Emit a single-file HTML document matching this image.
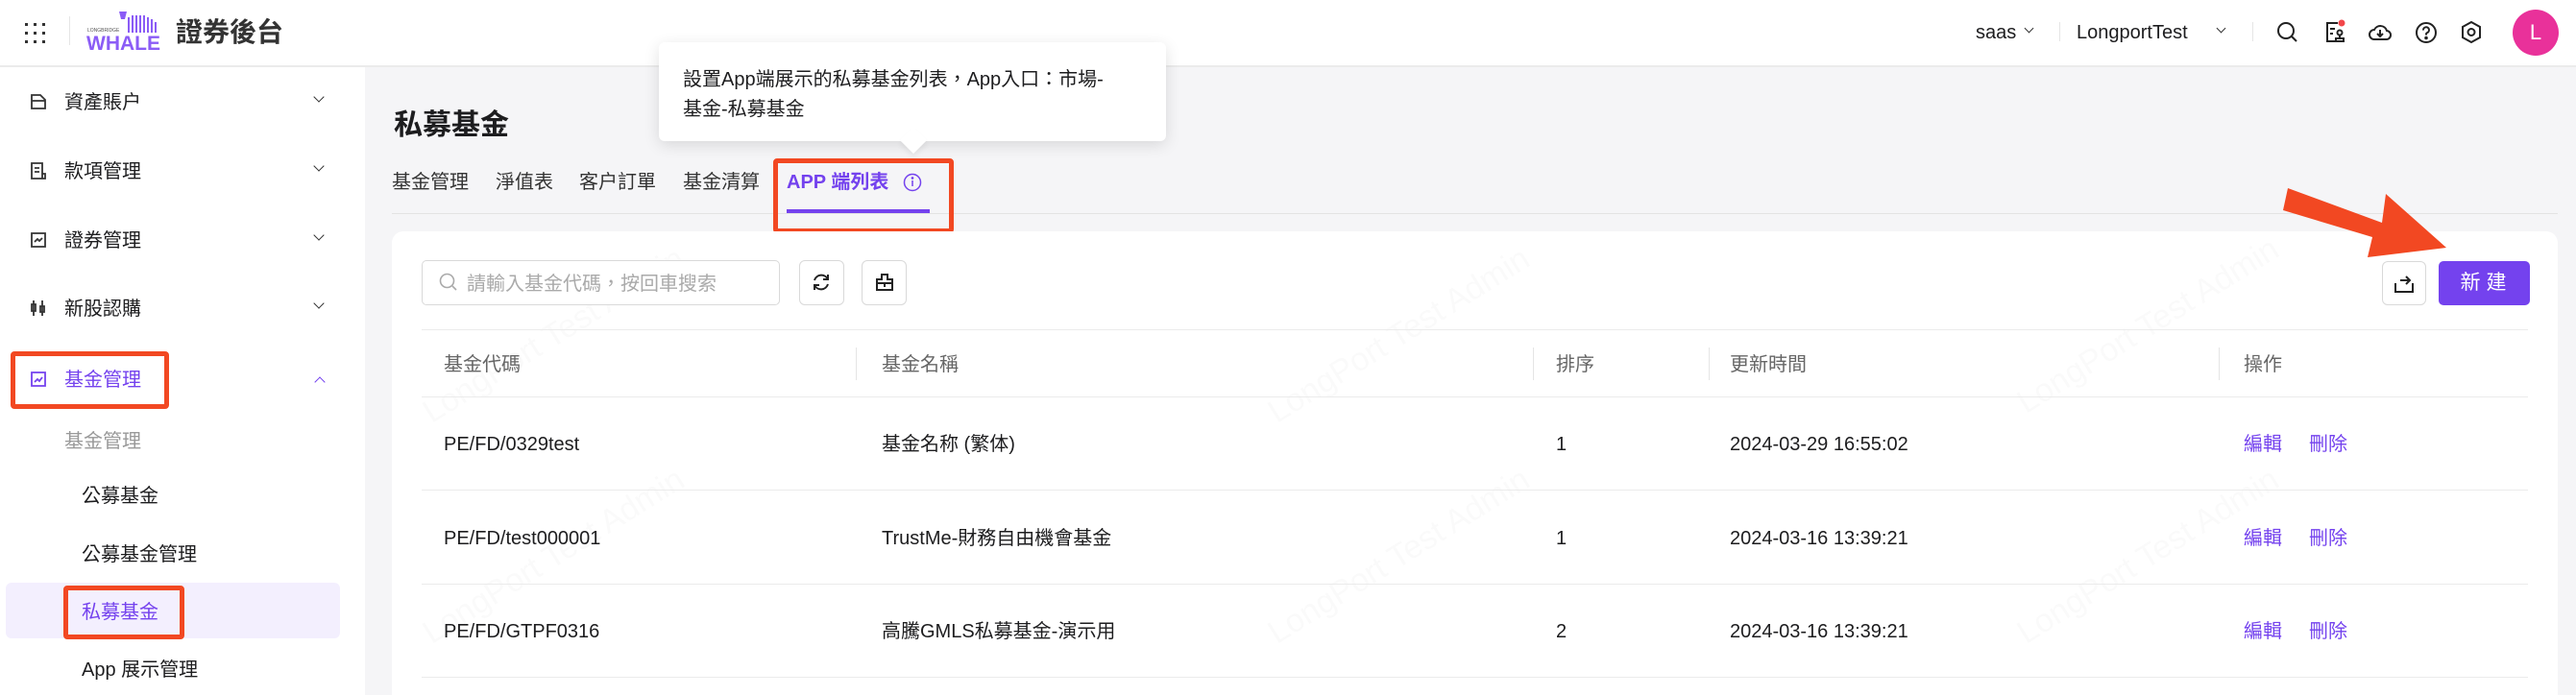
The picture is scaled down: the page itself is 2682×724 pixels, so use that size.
<!DOCTYPE html>
<html style="width:2682px;height:724px;overflow:hidden"><head><meta charset="utf-8"><style>
*{margin:0;padding:0;box-sizing:border-box}
body{width:2682px;height:724px;overflow:hidden;background:#f5f5f7;font-family:"Liberation Sans","Noto Sans CJK TC",sans-serif;color:#1d1d1f;position:relative}
.a{position:absolute;white-space:nowrap;line-height:24px}
.hdr{position:absolute;left:0;top:0;width:2682px;height:70px;background:#fff;border-bottom:2px solid #ebebeb}
.side{position:absolute;left:0;top:70px;width:380px;height:654px;background:#fff}
.mi{font-size:20px;color:#1d1d1f}
.chev{position:absolute;width:10px;height:10px;border-right:2px solid #333;border-bottom:2px solid #333;transform:rotate(45deg)}
.red{position:absolute;border:5px solid #f24822;border-radius:4px}
.card{position:absolute;left:408px;top:241px;width:2255px;height:483px;background:#fff;border-radius:12px 12px 0 0}
.th{font-size:20px;color:#666}
.td{font-size:20px;color:#1d1d1f}
.hl{position:absolute;left:439px;width:2193px;height:1px;background:#ebebeb}
.sep{position:absolute;width:1px;height:34px;background:#e5e5e5;top:362px}
.lnk{font-size:20px;color:#7442ee}
.btn{position:absolute;border:1.5px solid #d9d9d9;border-radius:6px;background:#fff}
.wm{position:absolute;font-size:34px;color:rgba(0,0,0,0.02);transform:rotate(-32deg);white-space:nowrap}
</style></head><body>
<div class="hdr"></div>
<svg class="a" style="left:26px;top:24px" width="22" height="22"><g fill="#333"><rect x="0" y="0" width="3" height="3"/><rect x="9" y="0" width="3" height="3"/><rect x="18" y="0" width="3" height="3"/><rect x="0" y="9" width="3" height="3"/><rect x="9" y="9" width="3" height="3"/><rect x="18" y="9" width="3" height="3"/><rect x="0" y="18" width="3" height="3"/><rect x="9" y="18" width="3" height="3"/><rect x="18" y="18" width="3" height="3"/></g></svg>
<div class="a" style="left:72px;top:17px;width:1px;height:30px;background:#e5e5e5"></div>
<svg class="a" style="left:90px;top:10px" width="78" height="44"><g fill="#8b5cf6"><rect x="43" y="8" width="2" height="16"/><rect x="47" y="6" width="2" height="18"/><rect x="51" y="6" width="2" height="18"/><rect x="55" y="6" width="2" height="18"/><rect x="59" y="6" width="2" height="18"/><rect x="63" y="8" width="2" height="16"/><rect x="67" y="10" width="2" height="14"/><rect x="71" y="13" width="2" height="11"/><path d="M34 2 L42 2 L40 10 L36 10Z"/></g><text x="1" y="23" font-size="5" fill="#555" font-family="Liberation Sans">LONGBRIDGE</text><text x="0" y="42" font-size="21" font-weight="bold" fill="#8b5cf6" font-family="Liberation Sans">WHALE</text></svg>
<div class="a" style="left:183px;top:16px;font-size:28px;line-height:36px;font-weight:bold;color:#333">證券後台</div>
<div class="a" style="left:2057px;top:22px;font-size:20px">saas</div>
<div class="chev" style="left:2109px;top:26px;width:7px;height:7px;border-width:1.5px"></div>
<div class="a" style="left:2144px;top:23px;width:1px;height:20px;background:#e5e5e5"></div>
<div class="a" style="left:2162px;top:22px;font-size:20px">LongportTest</div>
<div class="chev" style="left:2309px;top:26px;width:7px;height:7px;border-width:1.5px"></div>
<div class="a" style="left:2345px;top:23px;width:1px;height:20px;background:#e5e5e5"></div>
<svg class="a" style="left:2370px;top:22px" width="24" height="24" fill="none" stroke="#222" stroke-width="2"><circle cx="10" cy="10" r="8"/><path d="M16 16l5 5"/></svg>
<svg class="a" style="left:2420px;top:20px" width="26" height="26" fill="none" stroke="#222" stroke-width="2"><path d="M14 4H3v19h8M6 10h5M6 15h3"/><circle cx="16" cy="14" r="2.5"/><path d="M16 17v3M12 20h8v3h-8z"/><circle cx="18" cy="4" r="3.5" fill="#f2474a" stroke="none"/></svg>
<svg class="a" style="left:2466px;top:22px" width="24" height="24" fill="none" stroke="#222" stroke-width="2"><path d="M6 19a5 5 0 0 1 0-10 7 7 0 0 1 13 1 4.5 4.5 0 0 1-1 9z"/><path d="M12 9v7M9 13l3 3 3-3"/></svg>
<svg class="a" style="left:2514px;top:22px" width="24" height="24" fill="none" stroke="#222" stroke-width="2"><circle cx="12" cy="12" r="10"/><path d="M9 9.5a3 3 0 1 1 4 2.6c-1 .5-1 1-1 2.4"/><circle cx="12" cy="17.5" r=".8" fill="#222"/></svg>
<svg class="a" style="left:2561px;top:21px" width="24" height="26" fill="none" stroke="#222" stroke-width="2"><path d="M12 2l9 5v11l-9 5-9-5V7z"/><circle cx="12" cy="12.5" r="3.5"/></svg>
<div class="a" style="left:2616px;top:10px;width:48px;height:48px;border-radius:50%;background:#e9319a;color:#fff;font-size:22px;text-align:center;line-height:48px">L</div>

<div class="side"></div>
<svg class="a" style="left:31px;top:97px" width="18" height="18" fill="none" stroke="#333" stroke-width="1.8"><path d="M2 2h9l5 5v9H2zM2 8h14"/></svg>
<div class="a mi" style="left:67px;top:95px">資產賬户</div><div class="chev" style="left:328px;top:97px;width:8px;height:8px;border-width:1.8px"></div>
<svg class="a" style="left:31px;top:169px" width="18" height="18" fill="none" stroke="#333" stroke-width="1.8"><path d="M2 1h11v16H2zM5 6h5M5 10h5M13 12h3v5h-3"/></svg>
<div class="a mi" style="left:67px;top:167px">款項管理</div><div class="chev" style="left:328px;top:169px;width:8px;height:8px;border-width:1.8px"></div>
<svg class="a" style="left:31px;top:241px" width="18" height="18" fill="none" stroke="#333" stroke-width="1.8"><path d="M2 2h14v14H2zM5 11l3-3 2 2 3-3"/></svg>
<div class="a mi" style="left:67px;top:239px">證券管理</div><div class="chev" style="left:328px;top:241px;width:8px;height:8px;border-width:1.8px"></div>
<svg class="a" style="left:31px;top:312px" width="18" height="18" fill="none" stroke="#333" stroke-width="1.8"><path d="M4 1v16M13 1v16M2 5h4v7H2zM11 7h4v6h-4z"/></svg>
<div class="a mi" style="left:67px;top:310px">新股認購</div><div class="chev" style="left:328px;top:312px;width:8px;height:8px;border-width:1.8px"></div>
<svg class="a" style="left:31px;top:386px" width="18" height="18" fill="none" stroke="#7442ee" stroke-width="1.8"><path d="M2 2h14v14H2zM5 12l3-3 2 2 3-4"/></svg>
<div class="a mi" style="left:67px;top:384px;color:#7442ee">基金管理</div><div class="chev" style="left:329px;top:394px;width:8px;height:8px;border-width:1.8px;border-color:#7442ee;transform:rotate(225deg)"></div>
<div class="red" style="left:11px;top:366px;width:165px;height:60px"></div>
<div class="a mi" style="left:67px;top:448px;color:#999">基金管理</div>
<div class="a mi" style="left:85px;top:505px">公募基金</div>
<div class="a mi" style="left:85px;top:566px">公募基金管理</div>
<div class="a" style="left:6px;top:607px;width:348px;height:58px;background:#f3effe;border-radius:6px"></div>
<div class="a mi" style="left:85px;top:626px;color:#7442ee">私募基金</div>
<div class="red" style="left:66px;top:610px;width:126px;height:56px"></div>
<div class="a mi" style="left:85px;top:686px">App 展示管理</div>

<div class="a" style="left:410px;top:113px;font-size:30px;line-height:36px;font-weight:bold">私募基金</div>
<div class="a" style="left:408px;top:178px;font-size:20px;color:#333">基金管理</div>
<div class="a" style="left:516px;top:178px;font-size:20px;color:#333">淨值表</div>
<div class="a" style="left:603px;top:178px;font-size:20px;color:#333">客户訂單</div>
<div class="a" style="left:711px;top:178px;font-size:20px;color:#333">基金清算</div>
<div class="a" style="left:819px;top:178px;font-size:20px;color:#7442ee;font-weight:bold">APP 端列表</div>
<svg class="a" style="left:940px;top:180px" width="20" height="20" fill="none" stroke="#7442ee" stroke-width="1.5"><circle cx="10" cy="10" r="8.5"/><path d="M10 8v6"/><circle cx="10" cy="5.5" r=".6" fill="#7442ee"/></svg>
<div class="a" style="left:408px;top:222px;width:2255px;height:1px;background:#e3e3e3"></div>
<div class="a" style="left:819px;top:218px;width:149px;height:4px;background:#7442ee"></div>
<div class="red" style="left:805px;top:165px;width:188px;height:78px"></div>

<div class="card"></div>
<div class="wm" style="left:420px;top:330px">LongPort Test Admin</div>
<div class="wm" style="left:1300px;top:330px">LongPort Test Admin</div>
<div class="wm" style="left:2080px;top:320px">LongPort Test Admin</div>
<div class="wm" style="left:420px;top:560px">LongPort Test Admin</div>
<div class="wm" style="left:1300px;top:560px">LongPort Test Admin</div>
<div class="wm" style="left:2080px;top:560px">LongPort Test Admin</div>

<div class="btn" style="left:439px;top:271px;width:373px;height:47px;border-radius:5px"></div>
<svg class="a" style="left:457px;top:284px" width="20" height="20" fill="none" stroke="#aaa" stroke-width="1.6"><circle cx="8.5" cy="8.5" r="7"/><path d="M14 14l4 4"/></svg>
<div class="a" style="left:486px;top:284px;font-size:20px;color:#aaa">請輸入基金代碼，按回車搜索</div>
<div class="btn" style="left:832px;top:271px;width:47px;height:47px"></div>
<svg class="a" style="left:844px;top:283px" width="22" height="22" fill="none" stroke="#222" stroke-width="2"><path d="M4 9a7.5 7.5 0 0 1 14-1M18 13a7.5 7.5 0 0 1-14 1"/><path d="M18 3v5h-5M4 19v-5h5"/></svg>
<div class="btn" style="left:897px;top:271px;width:47px;height:47px"></div>
<svg class="a" style="left:910px;top:283px" width="22" height="22" fill="none" stroke="#222" stroke-width="2"><path d="M8 3h6v5h5v11H3V8h5zM3 12h16M11 12v4"/></svg>
<div class="btn" style="left:2480px;top:272px;width:46px;height:46px"></div>
<svg class="a" style="left:2492px;top:283px" width="22" height="24" fill="none" stroke="#222" stroke-width="2"><path d="M2 12v9h18v-9M7 9h10M13 5l4 4-4 4"/></svg>
<div class="a" style="left:2539px;top:272px;width:95px;height:46px;background:#7442ee;border-radius:5px;color:#fff;font-size:21px;text-align:center;line-height:46px;letter-spacing:6px;padding-left:4px">新建</div>

<div class="hl" style="top:343px"></div>
<div class="a th" style="left:462px;top:368px">基金代碼</div>
<div class="sep" style="left:891px"></div>
<div class="a th" style="left:918px;top:368px">基金名稱</div>
<div class="sep" style="left:1596px"></div>
<div class="a th" style="left:1620px;top:368px">排序</div>
<div class="sep" style="left:1779px"></div>
<div class="a th" style="left:1801px;top:368px">更新時間</div>
<div class="sep" style="left:2310px"></div>
<div class="a th" style="left:2336px;top:368px">操作</div>
<div class="hl" style="top:413px"></div>

<div class="a td" style="left:462px;top:451px">PE/FD/0329test</div>
<div class="a td" style="left:918px;top:451px">基金名称 (繁体)</div>
<div class="a td" style="left:1620px;top:451px">1</div>
<div class="a td" style="left:1801px;top:451px">2024-03-29 16:55:02</div>
<div class="a lnk" style="left:2336px;top:451px">編輯</div><div class="a lnk" style="left:2404px;top:451px">刪除</div>
<div class="hl" style="top:510px"></div>
<div class="a td" style="left:462px;top:549px">PE/FD/test000001</div>
<div class="a td" style="left:918px;top:549px">TrustMe-財務自由機會基金</div>
<div class="a td" style="left:1620px;top:549px">1</div>
<div class="a td" style="left:1801px;top:549px">2024-03-16 13:39:21</div>
<div class="a lnk" style="left:2336px;top:549px">編輯</div><div class="a lnk" style="left:2404px;top:549px">刪除</div>
<div class="hl" style="top:608px"></div>
<div class="a td" style="left:462px;top:646px">PE/FD/GTPF0316</div>
<div class="a td" style="left:918px;top:646px">高騰GMLS私募基金-演示用</div>
<div class="a td" style="left:1620px;top:646px">2</div>
<div class="a td" style="left:1801px;top:646px">2024-03-16 13:39:21</div>
<div class="a lnk" style="left:2336px;top:646px">編輯</div><div class="a lnk" style="left:2404px;top:646px">刪除</div>
<div class="hl" style="top:705px"></div>

<div class="a" style="left:686px;top:44px;width:528px;height:103px;background:#fff;border-radius:6px;box-shadow:0 4px 16px rgba(0,0,0,0.12)"></div>
<div class="a" style="left:941px;top:136px;width:20px;height:20px;background:#fff;transform:rotate(45deg);box-shadow:3px 3px 6px rgba(0,0,0,0.06)"></div>
<div class="a" style="left:711px;top:71px;font-size:20px;color:#1d1d1f">設置App端展示的私募基金列表，App入口：市場-</div>
<div class="a" style="left:711px;top:102px;font-size:20px;color:#1d1d1f">基金-私募基金</div>

<svg class="a" style="left:0;top:0" width="2682" height="724"><polygon points="2382,196 2480,232 2484,202 2547,258 2465,268 2470,247 2377,219" fill="#f24822"/></svg>
</body></html>
